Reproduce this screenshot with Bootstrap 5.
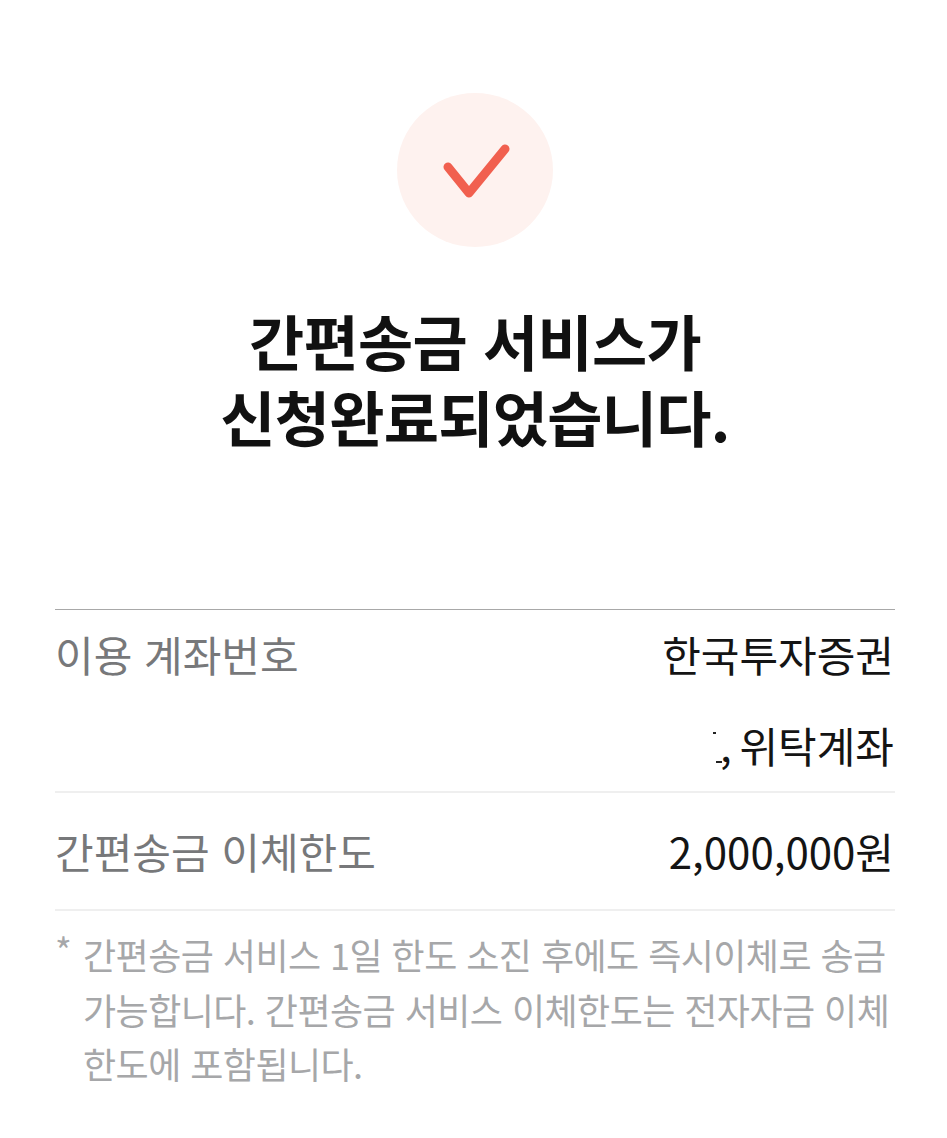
<!DOCTYPE html>
<html lang="ko">
<head>
    <meta charset="UTF-8">
    <meta name="viewport" content="width=device-width, initial-scale=1.0">
    <title>간편송금 신청완료</title>
    <link href="https://cdn.jsdelivr.net/npm/bootstrap@5.3.0/dist/css/bootstrap.min.css" rel="stylesheet">
    <style>
        body { font-family: "Noto Sans CJK KR", "Noto Sans", sans-serif; background: #fff; }
        .page-wrap { padding: 93px 52px 0 55px; }
        .check-circle { width: 156px; height: 154px; border-radius: 50%; background: #fef2ef; }
        .done-title { margin: 55px 0 0; font-size: 60px; line-height: 76px; font-weight: 700; color: #111; letter-spacing: -0.7px; }
        .info-list { margin-top: 155px; border-top: 1px solid #a8a8a8; }
        .info-row { border-bottom: 2px solid #efefef; }
        .info-label { font-size: 42px; line-height: 60px; color: #77787a; }
        .info-value { font-size: 42px; line-height: 60px; color: #141414; }
        .row-account { height: 183px; padding: 14px 1px 0 0; }
        .row-limit { height: 118px; padding: 28px 1px 0 0; }
        .line-two { margin-top: 31px; position: relative; word-spacing: -4px; }
        .mask-speck { position: absolute; background: #222; height: 2px; }
        .speck-top { width: 3px; right: 178px; top: 17px; }
        .speck-low { width: 6px; right: 172px; top: 46px; }
        .note-wrap { margin-top: 16px; font-size: 36px; line-height: 54.5px; color: #a6a7a9; letter-spacing: -0.55px; }
        .note-star { width: 28px; flex-shrink: 0; line-height: 44px; }
    </style>
</head>
<body>
    <div class="page-wrap">
        <div class="d-flex justify-content-center">
            <div class="check-circle d-flex align-items-center justify-content-center">
                <svg width="70" height="56" viewBox="0 0 70 56">
                    <path d="M8 25 L29 51 L65 7" fill="none" stroke="#f1604f" stroke-width="9" stroke-linecap="round" stroke-linejoin="round"/>
                </svg>
            </div>
        </div>
        <h1 class="done-title text-center">간편송금 서비스가<br>신청완료되었습니다.</h1>

        <div class="info-list">
            <div class="info-row row-account d-flex justify-content-between">
                <div class="info-label">이용 계좌번호</div>
                <div class="text-end">
                    <div class="info-value">한국투자증권</div>
                    <div class="info-value line-two"><span class="mask-speck speck-top"></span><span class="mask-speck speck-low"></span>, 위탁계좌</div>
                </div>
            </div>
            <div class="info-row row-limit d-flex justify-content-between">
                <div class="info-label">간편송금 이체한도</div>
                <div class="info-value">2,000,000원</div>
            </div>
        </div>

        <div class="note-wrap d-flex">
            <div class="note-star">*</div>
            <div>간편송금 서비스 1일 한도 소진 후에도 즉시이체로 송금 가능합니다. 간편송금 서비스 이체한도는 전자자금 이체한도에 포함됩니다.</div>
        </div>
    </div>
    <script src="https://cdn.jsdelivr.net/npm/bootstrap@5.3.0/dist/js/bootstrap.bundle.min.js"></script>
</body>
</html>
